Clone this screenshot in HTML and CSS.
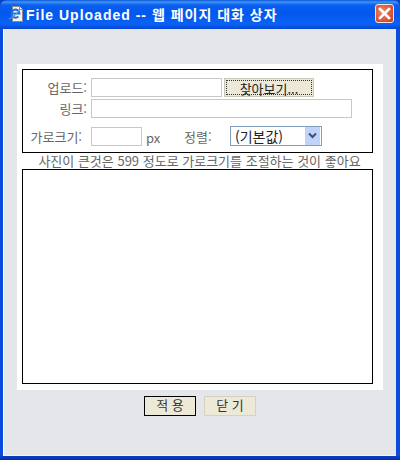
FILE: index.html
```html
<!DOCTYPE html>
<html lang="ko">
<head>
  <meta charset="UTF-8">
  <title>File Uploaded -- 웹 페이지 대화 상자</title>
  <link rel="stylesheet" href="styles.css">
</head>
<body>

  <div class="window">

    <!-- Title bar -->
    <div class="titlebar">
      <svg class="app-icon" width="17" height="18" viewBox="0 0 17 18">
        <path d="M4.500 1.500h7l3 3v12h-10z" fill="#f6f4ea" stroke="#8a8a80"/>
        <path d="M11.500 1.500v3h3" fill="#fff" stroke="#8a8a80"/>
        <path d="M3.500 8.500h8a4 4 0 1 0-1.200 3" fill="none" stroke="#1f6fd8" stroke-width="2"/>
        <path d="M1 14c2-1 8-5 11-10" fill="none" stroke="#4a9cf0" stroke-width="1.200"/>
      </svg>
      <span class="title">File Uploaded -- 웹 페이지 대화 상자</span>
      <div class="close">
        <svg width="13" height="13" viewBox="0 0 13 13">
          <path d="M2 2l9 9M11 2l-9 9" stroke="#fff" stroke-width="2.600" stroke-linecap="square"/>
        </svg>
      </div>
    </div>

    <div class="content">
      <div class="panel">

        <!-- Upload form -->
        <div class="box form-box">
          <div class="row">
            <label class="label">업로드:</label>
            <div class="field upload-field"></div>
            <button class="browse" type="button"><span>찾아보기...</span></button>
          </div>
          <div class="row">
            <label class="label">링크:</label>
            <div class="field link-field"></div>
          </div>
          <div class="row row-size">
            <label class="label">가로크기:</label>
            <div class="field size-field"></div>
            <span class="unit">px</span>
            <label class="align-label">정렬:</label>
            <div class="select">
              <span class="select-text">(기본값)</span>
              <div class="select-arrow">
                <svg width="11" height="8" viewBox="0 0 11 8">
                  <path d="M2 1.500l3.500 3.500 3.500-3.500" fill="none" stroke="#3a4f7e" stroke-width="2"/>
                </svg>
              </div>
            </div>
          </div>
        </div>

        <p class="hint">사진이 큰것은 599 정도로 가로크기를 조절하는 것이 좋아요</p>

        <!-- Preview -->
        <div class="box preview"></div>
      </div>

      <div class="actions">
        <button class="btn btn-default" type="button">적 용</button>
        <button class="btn" type="button">닫 기</button>
      </div>
    </div>

  </div>

</body>
</html>
```

FILE: styles.css
```css
* {
  box-sizing: border-box;
}

body {
  margin: 0;
  background: #0a3fc4;
  font-family: "Noto Sans CJK KR", "Noto Sans", sans-serif;
}

.window {
  width: 400px;
  height: 460px;
  display: flex;
  flex-direction: column;
  background: linear-gradient(to top, #08309f 0, #0a40c8 4px, #0a4be0 4px);
  border-radius: 7px 7px 0 0;
  overflow: hidden;
}

.titlebar {
  height: 29px;
  flex: none;
  display: flex;
  align-items: center;
  padding: 0 6px 0 8px;
  background: linear-gradient(#0a57d8 0, #3f93f5 2px, #0a5ff0 5px, #0258ee 14px, #0a62f5 24px, #0545d2 29px);
}

.app-icon {
  flex: none;
  margin-top: -2px;
}

.title {
  flex: 1;
  margin-left: 1px;
  margin-top: -1px;
  color: #fff;
  font-family: "Liberation Sans", "Noto Sans CJK KR", sans-serif;
  font-size: 14px;
  font-weight: bold;
  letter-spacing: 1px;
  white-space: nowrap;
}

.close {
  width: 19px;
  height: 19px;
  margin-top: -3px;
  display: flex;
  align-items: center;
  justify-content: center;
  border: 1px solid #f0e8e0;
  border-radius: 3px;
  background: radial-gradient(circle at 40% 40%, #ee8a68, #d9482a 75%, #c23a1c);
}

.content {
  flex: 1;
  margin: 0 4px 4px 3px;
  padding: 35px 13px 0 13px;
  background: #e4e6ea;
  border-left: 1px solid #fff;
  border-bottom: 1px solid #f4f6fa;
}

.panel {
  height: 326px;
  padding: 5px 10px 5px 5px;
  background: #fff;
}

.box {
  border: 1px solid #000;
  background: #fff;
}

.form-box {
  height: 84px;
  padding-top: 8px;
}

.row {
  display: flex;
  align-items: center;
  margin-bottom: 2px;
}

.row-size {
  margin-top: 7px;
}

.label {
  width: 64px;
  margin-right: 4px;
  text-align: right;
  font-size: 13px;
  color: #666;
}

.row-size .label {
  width: 59px;
  margin-right: 9px;
}

.field {
  height: 19px;
  border: 1px solid #c8c8c8;
  background: #fff;
}

.upload-field {
  width: 131px;
}

.link-field {
  width: 261px;
}

.size-field {
  width: 51px;
}

.browse {
  width: 90px;
  height: 19px;
  margin-left: 2px;
  padding: 1px;
  border: 1px solid #c9c7b8;
  background: #ece9d8;
  font-family: inherit;
  font-size: 13px;
  color: #222;
}

.browse span {
  display: block;
  height: 15px;
  line-height: 15px;
  border: 1px dotted #333;
}

.unit {
  width: 14px;
  margin-left: 4px;
  margin-top: 3px;
  font-size: 13px;
  color: #666;
}

.align-label {
  width: 30px;
  margin-left: 24px;
  margin-right: 16px;
  font-size: 13px;
  color: #666;
}

.select {
  width: 92px;
  height: 20px;
  display: flex;
  align-items: center;
  justify-content: space-between;
  border: 1px solid #7f9db9;
  background: #fff;
}

.select-text {
  margin-left: 4px;
  font-size: 14px;
  color: #222;
}

.select-arrow {
  width: 15px;
  height: 18px;
  margin-right: 1px;
  display: flex;
  align-items: center;
  justify-content: center;
  background: #c1d3fb;
}

.hint {
  height: 16px;
  margin: 0 -4px 0 0;
  font-size: 13px;
  line-height: 16px;
  color: #666;
  text-align: center;
  white-space: nowrap;
}

.preview {
  height: 215px;
}

.actions {
  display: flex;
  justify-content: center;
  gap: 8px;
  margin-top: 6px;
}

.btn {
  width: 52px;
  height: 20px;
  padding: 0 0 2px;
  border: 1px solid #d4d2c4;
  background: #ece9d8;
  font-family: inherit;
  font-size: 13px;
  line-height: 16px;
  color: #333;
}

.btn-default {
  border: 1px solid #000;
}
```
